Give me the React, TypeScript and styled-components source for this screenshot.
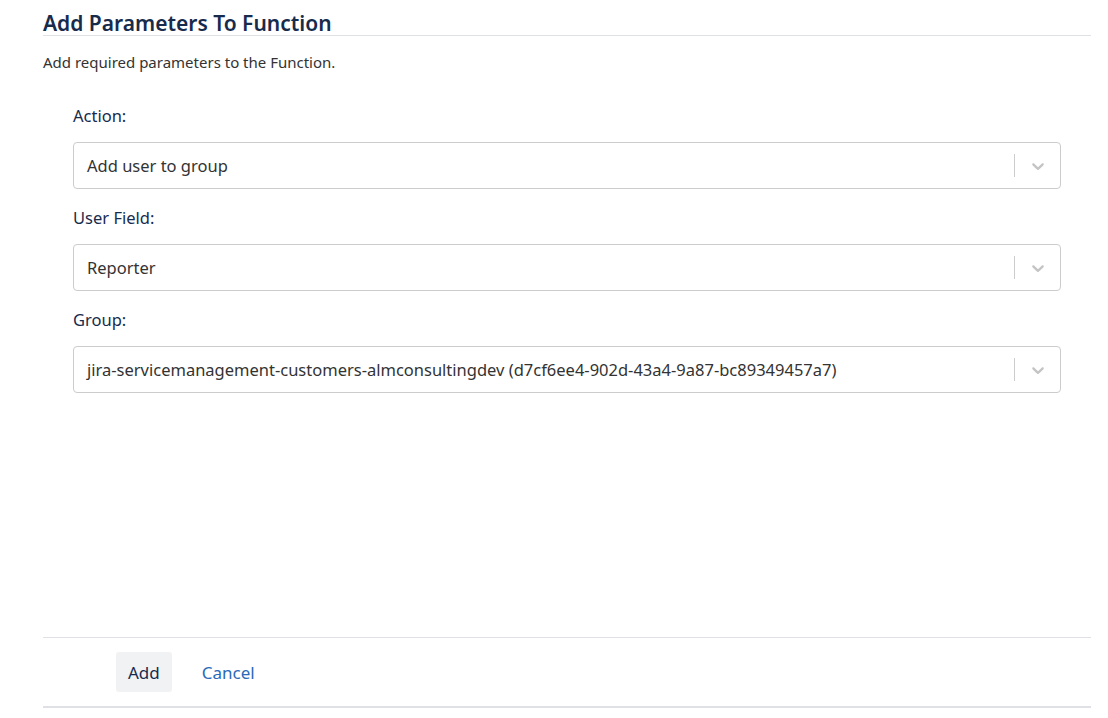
import React from "react";
import styled, { createGlobalStyle } from "styled-components";

const GlobalStyle = createGlobalStyle`
  html, body {
    margin: 0;
    padding: 0;
    background: #fff;
  }
  body {
    font-family: "Noto Sans", "Open Sans", sans-serif;
    color: #172b4d;
  }
`;

const Page = styled.div`
  width: 1108px;
  height: 718px;
  box-sizing: border-box;
  padding: 0 17px 0 43px;
  display: flex;
  flex-direction: column;
`;

const Header = styled.h2`
  margin: 0;
  padding: 12px 0 1px;
  font-size: 21px;
  font-weight: 600;
  line-height: 22px;
  color: #172b4d;
  border-bottom: 1px solid #dfe1e6;
`;

const Intro = styled.p`
  margin: 16px 0 0;
  font-size: 15px;
  line-height: 20px;
  color: #333;
`;

const FormBody = styled.div`
  flex: 1;
  padding: 33px 30px 0;
  display: flex;
  flex-direction: column;
`;

const Field = styled.div`
  display: flex;
  flex-direction: column;
  margin-bottom: 18px;
`;

const Label = styled.label`
  font-size: 16.5px;
  line-height: 22px;
  color: #172b4d;
  margin-bottom: 15px;
`;

const SelectBox = styled.div`
  height: 47px;
  box-sizing: border-box;
  border: 1px solid #cccccc;
  border-radius: 4px;
  display: flex;
  align-items: center;
  background: #fff;
`;

const Value = styled.div`
  flex: 1;
  padding-left: 13px;
  font-size: 16.5px;
  color: #333;
  white-space: nowrap;
  overflow: hidden;
`;

const Separator = styled.span`
  width: 1px;
  align-self: stretch;
  margin: 11px 0;
  background: #cccccc;
`;

const Indicator = styled.div`
  width: 45px;
  display: flex;
  justify-content: center;
  align-items: center;
  color: #c4c4c4;
`;

const Footer = styled.div`
  border-top: 1px solid #dfe1e6;
  border-bottom: 2px solid #dfe1e6;
  margin-bottom: 10px;
  padding: 14px 0 14px 73px;
  display: flex;
  align-items: center;
  gap: 30px;
`;

const Button = styled.button<{ $link?: boolean }>`
  font-family: inherit;
  font-size: 17px;
  height: 40px;
  padding: ${(p) => (p.$link ? "0" : "0 12px")};
  border: none;
  border-radius: 3px;
  cursor: pointer;
  background: ${(p) => (p.$link ? "transparent" : "#f1f2f4")};
  color: ${(p) => (p.$link ? "#2a6ab9" : "#172b4d")};
`;

const Chevron = () => (
  <svg width="20" height="20" viewBox="0 0 20 20" fill="currentColor">
    <path d="M4.516 7.548c0.436-0.446 1.043-0.481 1.576 0l3.908 3.747 3.908-3.747c0.533-0.481 1.141-0.446 1.574 0 0.436 0.445 0.408 1.197 0 1.615-0.406 0.418-4.695 4.502-4.695 4.502-0.217 0.223-0.502 0.335-0.787 0.335s-0.57-0.112-0.789-0.335c0 0-4.287-4.084-4.695-4.502s-0.436-1.170 0-1.615z" />
  </svg>
);

type SelectProps = { label: string; value: string };

const Select: React.FC<SelectProps> = ({ label, value }) => (
  <Field>
    <Label>{label}</Label>
    <SelectBox>
      <Value>{value}</Value>
      <Separator />
      <Indicator>
        <Chevron />
      </Indicator>
    </SelectBox>
  </Field>
);

export default function App() {
  return (
    <>
      <GlobalStyle />
      <Page>
        <Header>Add Parameters To Function</Header>
        <Intro>Add required parameters to the Function.</Intro>
        <FormBody>
          <Select label="Action:" value="Add user to group" />
          <Select label="User Field:" value="Reporter" />
          <Select
            label="Group:"
            value="jira-servicemanagement-customers-almconsultingdev (d7cf6ee4-902d-43a4-9a87-bc89349457a7)"
          />
        </FormBody>
        <Footer>
          <Button>Add</Button>
          <Button $link>Cancel</Button>
        </Footer>
      </Page>
    </>
  );
}
